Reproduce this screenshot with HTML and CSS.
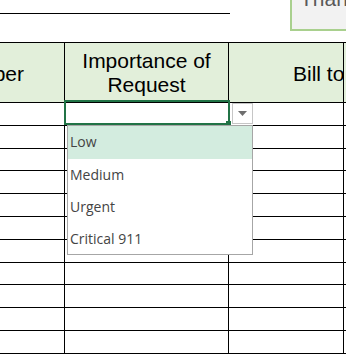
FILE: index.html
```html
<!DOCTYPE html>
<html lang="en">
<head>
  <meta charset="UTF-8">
  <title>Request Sheet</title>
  <link rel="stylesheet" href="styles.css">
</head>
<body>

  <!-- Title area -->
  <div class="top">
    <div class="title-line"></div>
  </div>

  <!-- Floating text box -->
  <div class="note">Thank you</div>

  <!-- Sheet -->
  <div class="sheet">
    <div class="cell head num"><span>Request Number</span></div>
    <div class="cell head imp">Importance of<br>Request</div>
    <div class="cell head bill"><span>Bill to Department</span></div>
    <div class="cell head edge"></div>

    <div class="cell"></div><div class="cell"></div><div class="cell"></div><div class="cell edge"></div>
    <div class="cell"></div><div class="cell"></div><div class="cell"></div><div class="cell edge"></div>
    <div class="cell"></div><div class="cell"></div><div class="cell"></div><div class="cell edge"></div>
    <div class="cell"></div><div class="cell"></div><div class="cell"></div><div class="cell edge"></div>
    <div class="cell"></div><div class="cell"></div><div class="cell"></div><div class="cell edge"></div>
    <div class="cell"></div><div class="cell"></div><div class="cell"></div><div class="cell edge"></div>
    <div class="cell"></div><div class="cell"></div><div class="cell"></div><div class="cell edge"></div>
    <div class="cell"></div><div class="cell"></div><div class="cell"></div><div class="cell edge"></div>
    <div class="cell"></div><div class="cell"></div><div class="cell"></div><div class="cell edge"></div>
    <div class="cell"></div><div class="cell"></div><div class="cell"></div><div class="cell edge"></div>
    <div class="cell"></div><div class="cell"></div><div class="cell"></div><div class="cell edge"></div>
  </div>
  <div class="sheet-end"></div>

  <!-- Active cell + validation list -->
  <div class="selected"><span class="handle"></span></div>
  <div class="drop-btn">
    <svg width="9" height="5" viewBox="0 0 9 5"><path d="M0 0 H9 L4.5 5 Z" fill="#6e6e6e"/></svg>
  </div>
  <ul class="drop-list">
    <li class="hover">Low</li>
    <li>Medium</li>
    <li>Urgent</li>
    <li>Critical 911</li>
  </ul>

</body>
</html>
```

FILE: styles.css
```css
/* General */
body {
  margin: 0;
  padding: 0;
  background-color: #ffffff;
  font-family: 'Liberation Sans', Arial, sans-serif;
  overflow: hidden;
  position: relative;
  width: 346px;
  height: 356px;
}

/* Title area */
.top {
  height: 42px;
}

.title-line {
  width: 230px;
  height: 13px;
  border-bottom: 1px solid #000;
}

.note {
  position: absolute;
  left: 290px;
  top: -20px;
  width: 80px;
  height: 51px;
  box-sizing: border-box;
  border: 2px solid #a9d08e;
  background-color: #f2f2f2;
  color: #595959;
  font-size: 21px;
  line-height: 24px;
  padding: 5px 0 0 8px;
  white-space: nowrap;
}

/* Sheet grid */
.sheet {
  display: grid;
  grid-template-columns: 65px 164px 115px 10px;
  grid-template-rows: 60px repeat(11, 22.8px);
  border-top: 1px solid #000;
}

.cell {
  box-sizing: border-box;
  border-right: 1px solid #000;
  border-bottom: 1px solid #000;
}

.cell.edge {
  border-right: none;
}

.sheet-end {
  width: 344px;
  margin-top: 2px;
  border-top: 1px solid #000;
}

.head {
  background-color: #e2efda;
  color: #000;
  font-size: 21px;
  line-height: 24px;
  display: flex;
  align-items: center;
  white-space: nowrap;
  overflow: hidden;
}

.head.num {
  justify-content: flex-end;
  padding-right: 40px;
  padding-top: 2px;
}

.head.imp {
  justify-content: center;
  text-align: center;
  padding-top: 1px;
}

.head.bill {
  padding-left: 64px;
  padding-top: 3px;
}

/* Active cell */
.selected {
  position: absolute;
  left: 64px;
  top: 100px;
  width: 166px;
  height: 25px;
  box-sizing: border-box;
  border: 2px solid #217346;
}

.selected .handle {
  position: absolute;
  right: -3px;
  bottom: -3px;
  width: 5px;
  height: 5px;
  background-color: #217346;
}

.drop-btn {
  position: absolute;
  left: 232px;
  top: 103px;
  width: 21px;
  height: 21px;
  box-sizing: border-box;
  border: 1px solid #c6c6c6;
  background-color: #ffffff;
  display: flex;
  align-items: center;
  justify-content: center;
}

.drop-list {
  position: absolute;
  left: 67px;
  top: 125px;
  width: 186px;
  height: 130px;
  box-sizing: border-box;
  margin: 0;
  padding: 0;
  list-style: none;
  border: 1px solid #a6a6a6;
  background-color: #ffffff;
  font-family: 'Open Sans', 'Noto Sans', sans-serif;
  font-size: 14px;
  color: #444444;
}

.drop-list li {
  height: 32px;
  line-height: 32px;
  padding-left: 2px;
}

.drop-list li.hover {
  height: 33px;
  background-color: #d3ecdf;
}
```
